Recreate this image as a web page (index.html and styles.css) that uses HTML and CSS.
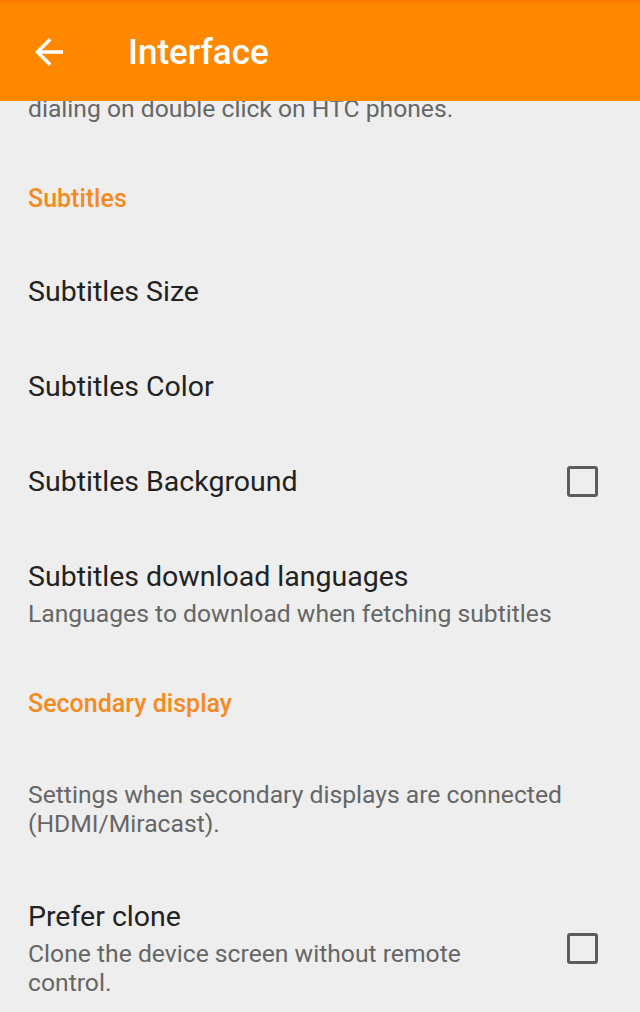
FILE: index.html
```html
<!DOCTYPE html>
<html lang="en">
<head>
    <meta charset="UTF-8">
    <meta name="viewport" content="width=device-width, initial-scale=1.0">
    <title>Interface</title>
    <link rel="stylesheet" href="styles.css">
</head>
<body>
    <header class="app-bar">
        <svg class="back" viewBox="0 0 24 24" width="42" height="42">
            <path d="M20 11H7.83l5.59-5.59L12 4l-8 8 8 8 1.41-1.41L7.83 13H20v-2z" fill="#fff"/>
        </svg>
        <h1 class="app-title">Interface</h1>
    </header>

    <main class="prefs">
        <div class="pref pref-cut">
            <div class="pref-text">
                <p class="summary">dialing on double click on HTC phones.</p>
            </div>
        </div>

        <div class="category">Subtitles</div>

        <div class="pref">
            <div class="pref-text">
                <p class="title">Subtitles Size</p>
            </div>
        </div>
        <div class="pref">
            <div class="pref-text">
                <p class="title">Subtitles Color</p>
            </div>
        </div>
        <div class="pref">
            <div class="pref-text">
                <p class="title">Subtitles Background</p>
            </div>
            <span class="checkbox"></span>
        </div>
        <div class="pref">
            <div class="pref-text">
                <p class="title">Subtitles download languages</p>
                <p class="summary">Languages to download when fetching subtitles</p>
            </div>
        </div>

        <div class="category">Secondary display</div>

        <div class="pref">
            <div class="pref-text">
                <p class="summary summary-only">Settings when secondary displays are connected (HDMI/Miracast).</p>
            </div>
        </div>
        <div class="pref">
            <div class="pref-text">
                <p class="title">Prefer clone</p>
                <p class="summary">Clone the device screen without remote control.</p>
            </div>
            <span class="checkbox"></span>
        </div>
    </main>
</body>
</html>
```

FILE: styles.css
```css
body {
    margin: 0;
    width: 640px;
    height: 1012px;
    overflow: hidden;
    background-color: #eeeeee;
    font-family: Roboto, "Noto Sans", sans-serif;
}
.app-bar {
    position: fixed;
    top: 0;
    left: 0;
    right: 0;
    z-index: 2;
    height: 98px;
    display: flex;
    align-items: center;
    padding-left: 28px;
    background-color: #ff8800;
    border-top: 3px solid #ff7a00;
}
.back {
    display: block;
    flex-shrink: 0;
}
.app-title {
    margin: 0 0 0 58px;
    font-size: 35px;
    font-weight: 500;
    color: #fff;
}
.prefs {
    padding-top: 94px;
}
.pref {
    display: flex;
    align-items: center;
    padding: 31px 42px 31px 28px;
}
.pref-text {
    flex: 1;
    min-width: 0;
    padding-right: 27px;
}
.pref-cut {
    padding-top: 0;
}
.title {
    margin: 0;
    font-size: 28.5px;
    line-height: 33px;
    color: #222;
}
.summary {
    margin: 6px 0 0;
    font-size: 24.7px;
    line-height: 29px;
    color: #666;
}
.summary-only,
.pref-cut .summary {
    margin-top: 0;
}
.category {
    padding: 30px 28px 31px;
    font-size: 25px;
    line-height: 29px;
    font-weight: 500;
    color: #f58a1f;
}
.checkbox {
    flex-shrink: 0;
    width: 25px;
    height: 25px;
    border: 3px solid #5c5c5c;
    border-radius: 3px;
}
```
